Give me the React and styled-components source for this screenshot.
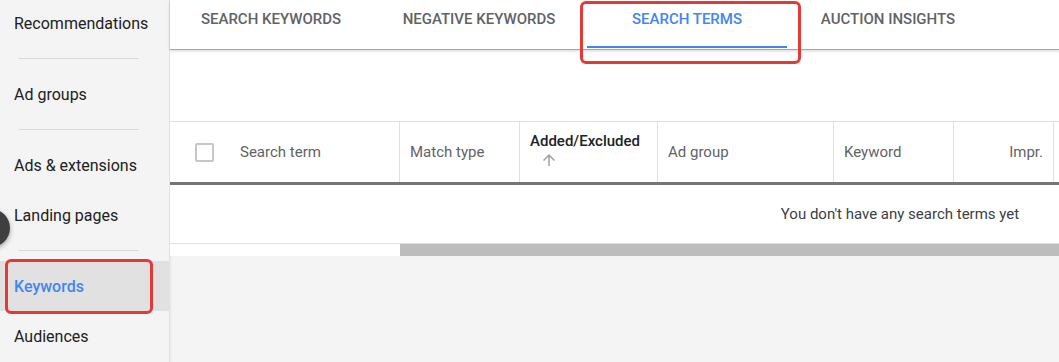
import React from 'react';
import styled, { createGlobalStyle } from 'styled-components';

const GlobalStyle = createGlobalStyle`
  html, body { margin: 0; padding: 0; }
  body {
    font-family: Roboto, "Liberation Sans", Arial, sans-serif;
    background: #f4f4f4;
    overflow: hidden;
  }
`;

const Page = styled.div`
  position: relative;
  display: flex;
  width: 1059px;
  height: 362px;
  overflow: hidden;
  background: #f4f4f4;
`;

const Sidebar = styled.nav`
  width: 169px;
  flex-shrink: 0;
  background: #f4f4f4;
  border-right: 1px solid #e2e2e2;
  box-shadow: 1px 0 2px rgba(0, 0, 0, 0.06);
  display: flex;
  flex-direction: column;
  margin-top: -2px;
`;

const NavItem = styled.div`
  height: 50px;
  display: flex;
  align-items: center;
  padding-left: 14px;
  font-size: 16px;
  color: ${({ active }) => (active ? '#4285f4' : '#202124')};
  font-weight: ${({ active }) => (active ? 500 : 400)};
  background: ${({ active }) => (active ? '#e1e1e1' : 'transparent')};
`;

const NavDivider = styled.div`
  height: 21px;
  display: flex;
  align-items: center;
  padding: 0 30px 0 19px;
  &::after {
    content: '';
    flex: 1;
    height: 1px;
    background: #d9d9d9;
  }
`;

const Main = styled.main`
  flex: 1;
  min-width: 0;
  display: flex;
  flex-direction: column;
`;

const TabBar = styled.div`
  height: 49px;
  flex-shrink: 0;
  display: flex;
  gap: 8px;
  padding-left: 1px;
  background: #fff;
  border-bottom: 1px solid #a8a8a8;
  box-shadow: 0 1px 3px rgba(0, 0, 0, 0.18);
  position: relative;
  z-index: 1;
`;

const Tab = styled.div`
  width: ${({ narrow }) => (narrow ? '186px' : '200px')};
  box-sizing: border-box;
  padding-top: 10px;
  text-align: center;
  font-size: 15px;
  font-weight: 500;
  line-height: 18px;
  text-transform: uppercase;
  color: ${({ active }) => (active ? '#4285f4' : '#5f6368')};
  border-bottom: 2px solid ${({ active }) => (active ? '#4285f4' : 'transparent')};
  margin-bottom: 1px;
`;

const Content = styled.div`
  background: #fff;
  padding-top: 71px;
  overflow: hidden;
`;

const Table = styled.div`
  width: 1460px;
`;

const HeaderRow = styled.div`
  display: grid;
  grid-template-columns: 60px 170px 120px 138px 176px 120px 100px 1fr;
  height: 60px;
  border-top: 1px solid #e0e0e0;
  border-bottom: 3px solid #757575;
`;

const HeadCell = styled.div`
  display: flex;
  flex-direction: column;
  justify-content: center;
  align-items: ${({ right }) => (right ? 'flex-end' : 'flex-start')};
  padding: 0 10px ${({ sorted }) => (sorted ? '8px' : '0')};
  font-size: 15px;
  color: ${({ sorted }) => (sorted ? '#202124' : '#5f6368')};
  font-weight: ${({ sorted }) => (sorted ? 500 : 400)};
  border-right: ${({ divider }) => (divider ? '1px solid #e0e0e0' : 'none')};
`;

const CheckCell = styled.div`
  display: flex;
  align-items: center;
  padding-left: 25px;
`;

const Checkbox = styled.div`
  width: 15px;
  height: 15px;
  border: 2px solid #c6c6c6;
  border-radius: 2px;
`;

const SortIcon = styled.svg`
  width: 18px;
  height: 18px;
  margin: 1px 0 -4px 10px;
  fill: #9e9e9e;
`;

const EmptyRow = styled.div`
  height: 58px;
  display: flex;
  align-items: center;
  justify-content: center;
  font-size: 15px;
  color: #3c4043;
  border-bottom: 1px solid #e0e0e0;
`;

const ScrollTrack = styled.div`
  display: flex;
  height: 12px;
  background: #fff;
  padding-left: 230px;
`;

const ScrollThumb = styled.div`
  flex: 1;
  background: #bdbdbd;
`;

const Highlight = styled.div`
  position: absolute;
  border: 3px solid #e53935;
  border-radius: 6px;
  box-sizing: border-box;
  pointer-events: none;
  z-index: 5;
`;

const FloatButton = styled.div`
  position: absolute;
  left: -28px;
  top: 209px;
  width: 38px;
  height: 38px;
  border-radius: 50%;
  background: #3f3f3f;
  box-shadow: 0 2px 5px rgba(0, 0, 0, 0.35);
  z-index: 4;
`;

const navGroups = [
  ['Recommendations'],
  ['Ad groups'],
  ['Ads & extensions', 'Landing pages'],
  ['Keywords', 'Audiences'],
];

const tabs = ['Search keywords', 'Negative keywords', 'Search terms', 'Auction insights'];

export default function App() {
  return (
    <>
      <GlobalStyle />
      <Page>
        <Sidebar>
          {navGroups.map((group, gi) => (
            <React.Fragment key={gi}>
              {gi > 0 && <NavDivider />}
              {group.map((label) => (
                <NavItem key={label} active={label === 'Keywords'}>
                  {label}
                </NavItem>
              ))}
            </React.Fragment>
          ))}
        </Sidebar>
        <Main>
          <TabBar>
            {tabs.map((t, i) => (
              <Tab key={t} active={t === 'Search terms'} narrow={i === 3}>
                {t}
              </Tab>
            ))}
          </TabBar>
          <Content>
            <Table>
              <HeaderRow>
                <CheckCell>
                  <Checkbox />
                </CheckCell>
                <HeadCell divider>Search term</HeadCell>
                <HeadCell divider>Match type</HeadCell>
                <HeadCell divider sorted>
                  Added/Excluded
                  <SortIcon viewBox="0 0 24 24">
                    <path d="M4 12l1.41 1.41L11 7.83V20h2V7.83l5.58 5.59L20 12l-8-8-8 8z" />
                  </SortIcon>
                </HeadCell>
                <HeadCell divider>Ad group</HeadCell>
                <HeadCell divider>Keyword</HeadCell>
                <HeadCell divider right>Impr.</HeadCell>
                <HeadCell />
              </HeaderRow>
              <EmptyRow>You don't have any search terms yet</EmptyRow>
            </Table>
          </Content>
          <ScrollTrack>
            <ScrollThumb />
          </ScrollTrack>
        </Main>
        <FloatButton />
        <Highlight style={{ left: 580, top: 1, width: 221, height: 63 }} />
        <Highlight style={{ left: 5, top: 259, width: 148, height: 55 }} />
      </Page>
    </>
  );
}
